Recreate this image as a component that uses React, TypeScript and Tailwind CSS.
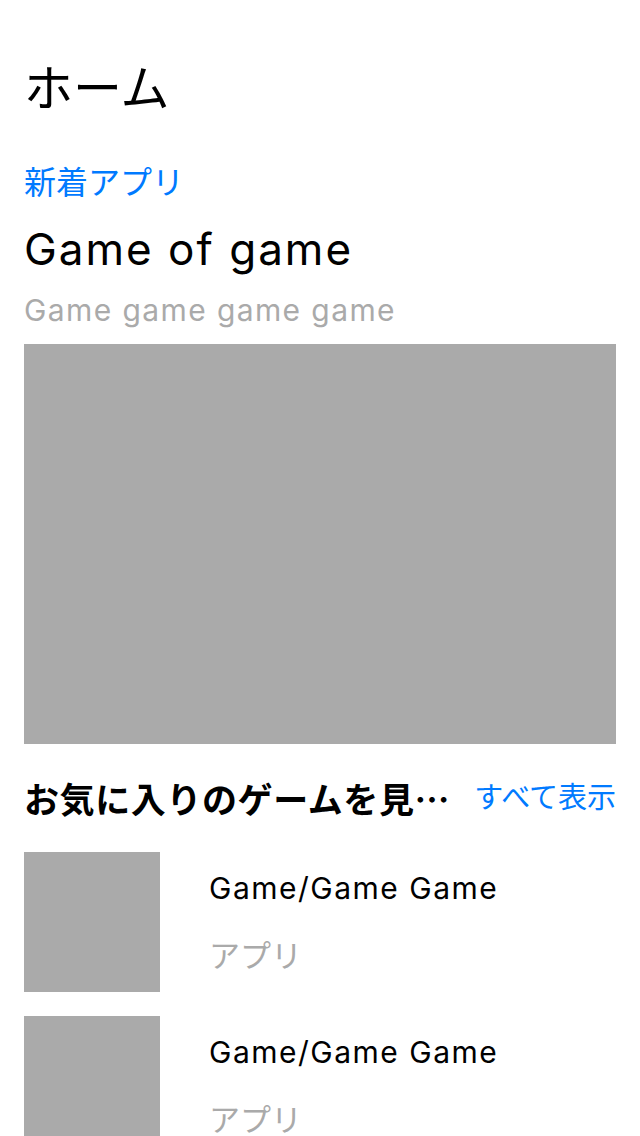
const jp = { fontFamily: 'Inter, "Noto Sans CJK JP", sans-serif' };
const cjk = { fontFamily: '"Noto Sans CJK JP", sans-serif' };

function GameRow() {
  return (
    <div className="flex">
      <div className="w-[136px] h-[140px] shrink-0 bg-[#aaaaaa]" />
      <div className="ml-[49px] pt-[18px] flex flex-col">
        <div className="text-[30px] leading-[36px] tracking-[1.5px] text-black">Game/Game Game</div>
        <div className="mt-[32px] text-[31px] leading-[36px] text-[#aaaaaa]">アプリ</div>
      </div>
    </div>
  );
}

export default function App() {
  return (
    <div className="w-[640px] h-[1136px] overflow-hidden bg-white px-[24px] pt-[61px]" style={jp}>
      <h1 className="text-[49px] leading-[56px] text-black">ホーム</h1>

      <div className="mt-[48px] text-[32px] leading-[36px] text-[#007aff]">新着アプリ</div>
      <div className="mt-[22px] text-[44px] leading-[52px] tracking-[2px] text-black">Game of game</div>
      <div className="mt-[17px] text-[30px] leading-[36px] tracking-[1.4px] text-[#aaaaaa]">
        Game game game game
      </div>
      <div className="mt-[16px] h-[400px] w-full bg-[#aaaaaa]" />

      <div className="mt-[34px] flex items-center justify-between h-[40px]">
        <div className="whitespace-nowrap text-[35px] leading-[40px] tracking-[0.6px] font-bold text-black" style={cjk}>
          お気に入りのゲームを見…
        </div>
        <div className="text-[29px] leading-[40px] text-[#007aff] shrink-0">すべて表示</div>
      </div>

      <div className="mt-[34px] flex flex-col gap-[24px]">
        <GameRow />
        <GameRow />
      </div>
    </div>
  );
}
